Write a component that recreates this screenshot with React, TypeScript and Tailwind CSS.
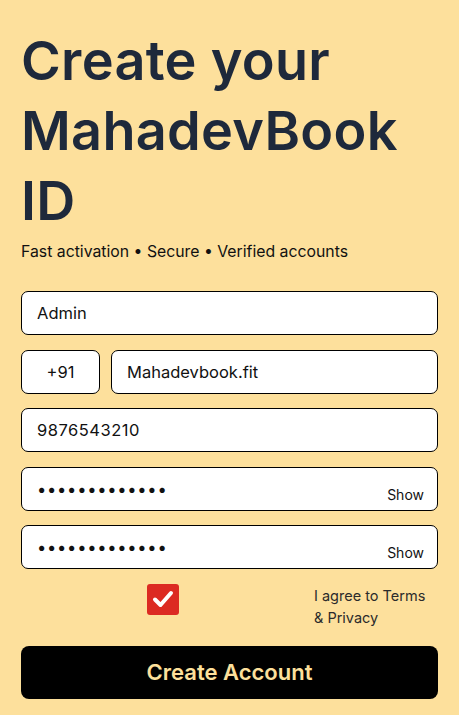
import { useState } from "react";

const fieldClass =
  "h-[44px] min-w-0 rounded-[7px] border border-black bg-white px-[15px] text-[16.5px] text-[#111] outline-none";

function PasswordField({ value, autofilled }: { value: string; autofilled?: boolean }) {
  const [shown, setShown] = useState(false);
  return (
    <div className="relative">
      <input
        type={shown ? "text" : "password"}
        defaultValue={value}
        className={`${fieldClass} w-full tracking-[0.75px] ${autofilled ? "bg-[#e8f0fe]" : ""}`}
      />
      <button
        type="button"
        onClick={() => setShown(!shown)}
        className="absolute bottom-[6px] right-[14px] text-[14px] text-[#111]"
      >
        Show
      </button>
    </div>
  );
}

export default function App() {
  const [agreed, setAgreed] = useState(true);

  return (
    <div className="min-h-[715px] bg-[#fde09c] px-[21px] pt-[26px] pb-6 font-['Inter',sans-serif]">
      <h1 className="text-[54px] font-semibold leading-[70px] tracking-[0.3px] text-[#1e293b]">
        Create your
        <br />
        MahadevBook
        <br />
        ID
      </h1>
      <p className="mt-[5px] text-[15.8px] leading-[22px] text-[#111]">
        Fast activation • Secure • Verified accounts
      </p>

      <form className="mt-[28px] flex flex-col gap-[14.5px]" onSubmit={(e) => e.preventDefault()}>
        <input defaultValue="Admin" className={`${fieldClass} w-full`} />
        <div className="flex gap-[11px]">
          <input defaultValue="+91" className={`${fieldClass} w-[79px] shrink-0 text-center`} />
          <input defaultValue="Mahadevbook.fit" className={`${fieldClass} flex-1`} />
        </div>
        <input defaultValue="9876543210" className={`${fieldClass} w-full tracking-[0.5px]`} />
        <PasswordField value="adminpass1234" autofilled />
        <PasswordField value="adminpass1234" />

        <div className="flex items-start">
          <button
            type="button"
            onClick={() => setAgreed(!agreed)}
            className="ml-[126px] flex h-[31px] w-[32px] items-center justify-center rounded-[3px] bg-[#dc2a22]"
          >
            {agreed && (
              <svg width="22" height="20" viewBox="0 0 22 20" fill="none">
                <path d="M3 10.5 L8.5 16 L19 4" stroke="white" strokeWidth="4" strokeLinecap="round" strokeLinejoin="round" />
              </svg>
            )}
          </button>
          <label className="ml-auto mr-[7px] mt-[1px] w-[117px] text-[14.5px] leading-[22px] text-[#2b2b2b]">
            I agree to Terms &amp; Privacy
          </label>
        </div>

        <button
          type="submit"
          className="mt-[3px] h-[53px] w-full rounded-[8px] bg-black text-[22px] font-semibold text-[#fde09c]"
        >
          Create Account
        </button>
      </form>
    </div>
  );
}
